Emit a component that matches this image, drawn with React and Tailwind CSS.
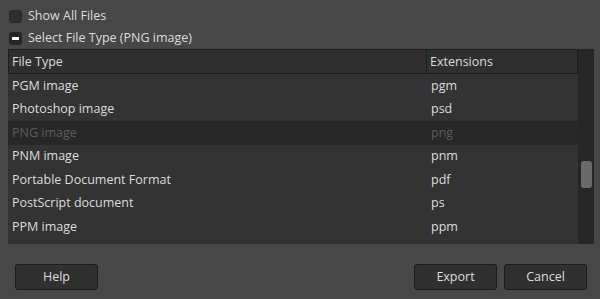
import React from "react";

const rows = [
  { name: "PGM image", ext: "pgm" },
  { name: "Photoshop image", ext: "psd" },
  { name: "PNG image", ext: "png", selected: true },
  { name: "PNM image", ext: "pnm" },
  { name: "Portable Document Format", ext: "pdf" },
  { name: "PostScript document", ext: "ps" },
  { name: "PPM image", ext: "ppm" },
];

function Button({ children }) {
  return (
    <button className="h-[26px] w-[83px] rounded-[3px] border border-[#1c1c1c] bg-[#303030] text-[12.5px] text-[#dcdcdc]">
      {children}
    </button>
  );
}

export default function App() {
  return (
    <div
      className="flex h-[299px] w-[600px] flex-col bg-[#474747] text-[12.5px] text-[#dcdcdc]"
      style={{ fontFamily: '"Open Sans", "Noto Sans", sans-serif' }}
    >
      {/* Options */}
      <div className="flex items-center gap-[6px] pl-[9px] pt-[8px]">
        <span className="h-[13px] w-[13px] rounded-[3px] border border-[#2a2a2a] bg-[#2e2e2e]" />
        <span className="leading-[16px]">Show All Files</span>
      </div>
      <div className="mt-[6px] flex items-center gap-[6px] pl-[9px]">
        <span className="flex h-[13px] w-[13px] items-center justify-center rounded-[3px] bg-[#262626]">
          <span className="h-[3px] w-[7px] bg-white" />
        </span>
        <span className="leading-[16px]">Select File Type (PNG image)</span>
      </div>

      {/* File type list */}
      <div className="ml-[8px] mt-[3px] flex h-[195px] w-[586px] bg-[#333333]">
        <div className="flex flex-1 flex-col">
          <div className="flex h-[25px]">
            <div className="flex w-[419px] items-center border border-[#1e1e1e] bg-[#2f2f2f] pl-[3px] pt-[1px]">
              File Type
            </div>
            <div className="flex w-[151px] items-center border border-l-0 border-[#1e1e1e] bg-[#2f2f2f] pl-[3px] pt-[1px]">
              Extensions
            </div>
          </div>
          {rows.map((row, index) => (
            <div
              key={index}
              className={
                "flex h-[23.5px] items-center pt-[1px] " +
                (row.selected ? "bg-[#272727] text-[#5c5c5c]" : "")
              }
            >
              <div className="w-[420px] pl-[4px]">{row.name}</div>
              <div className="pl-[3px]">{row.ext}</div>
            </div>
          ))}
        </div>
        {/* Scrollbar */}
        <div className="relative w-[16px] bg-[#262626]">
          <div className="absolute left-[3px] top-[112px] h-[27px] w-[11px] rounded-[3px] bg-[#6a6a6a]" />
        </div>
      </div>

      {/* Buttons */}
      <div className="mt-[20px] flex items-center justify-between pl-[15px] pr-[13px]">
        <Button>Help</Button>
        <div className="flex gap-[7px]">
          <Button>Export</Button>
          <Button>Cancel</Button>
        </div>
      </div>
    </div>
  );
}
